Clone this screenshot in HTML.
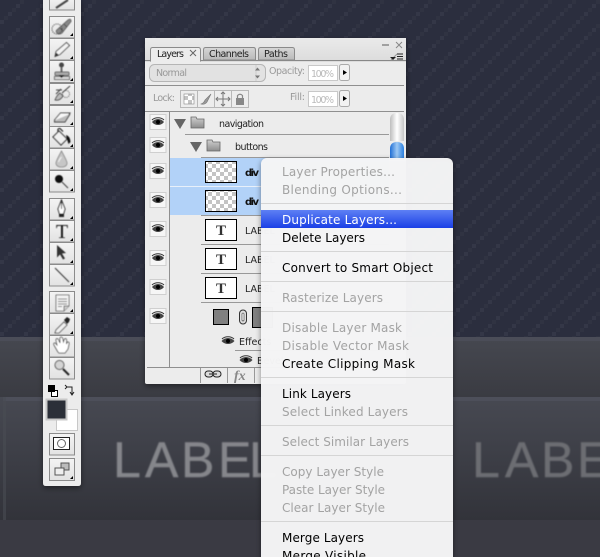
<!DOCTYPE html>
<html><head><meta charset="utf-8"><style>
html,body{margin:0;padding:0;width:600px;height:557px;overflow:hidden;background:#2b2e3e}
svg{display:block}
text{font-family:"DejaVu Sans","Liberation Sans",sans-serif}
.m{font-size:12px;fill:#000}
.d{font-size:12px;fill:#a3a3a3}
.p{font-size:9.5px;fill:#222}
.g{font-size:9.5px;fill:#999}
</style></head><body>
<svg width="600" height="557" viewBox="0 0 600 557" xmlns="http://www.w3.org/2000/svg">
<defs>
<pattern id="st" width="24" height="24" patternUnits="userSpaceOnUse">
<rect width="24" height="24" fill="#2b2e3e"/>
<g fill="#343747"><rect x="0" y="20" width="4" height="4"/><rect x="8" y="12" width="4" height="4"/><rect x="16" y="4" width="4" height="4"/></g>
<g fill="#303342"><rect x="4" y="16" width="4" height="4"/><rect x="12" y="8" width="4" height="4"/><rect x="20" y="0" width="4" height="4"/></g>
</pattern>
<pattern id="ck" width="8" height="8" patternUnits="userSpaceOnUse"><rect width="8" height="8" fill="#fff"/><rect width="4" height="4" fill="#c4c4c4"/><rect x="4" y="4" width="4" height="4" fill="#c4c4c4"/></pattern>
<linearGradient id="b1" x1="0" y1="0" x2="0" y2="1"><stop offset="0" stop-color="#45474f"/><stop offset="1" stop-color="#3a3b42"/></linearGradient>
<linearGradient id="b2" x1="0" y1="0" x2="0" y2="1"><stop offset="0" stop-color="#474952"/><stop offset="1" stop-color="#32333a"/></linearGradient>
<linearGradient id="hl" x1="0" y1="0" x2="0" y2="1"><stop offset="0" stop-color="#5e80f4"/><stop offset="1" stop-color="#1a3fe6"/></linearGradient>
<linearGradient id="btn" x1="0" y1="0" x2="0" y2="1"><stop offset="0" stop-color="#f4f4f4"/><stop offset="1" stop-color="#e2e2e2"/></linearGradient>
<linearGradient id="tab" x1="0" y1="0" x2="0" y2="1"><stop offset="0" stop-color="#d6d6d6"/><stop offset="1" stop-color="#b9b9b9"/></linearGradient>
<linearGradient id="top" x1="0" y1="0" x2="0" y2="1"><stop offset="0" stop-color="#eaeaea"/><stop offset="1" stop-color="#dcdcdc"/></linearGradient>
<linearGradient id="sb" x1="0" y1="0" x2="1" y2="0"><stop offset="0" stop-color="#1f6fd6"/><stop offset=".5" stop-color="#9cc8f4"/><stop offset="1" stop-color="#2a7fe0"/></linearGradient>
<linearGradient id="st2" x1="0" y1="0" x2="1" y2="0"><stop offset="0" stop-color="#bdbdbd"/><stop offset=".5" stop-color="#fff"/><stop offset="1" stop-color="#c6c6c6"/></linearGradient>
<linearGradient id="fold" x1="0" y1="0" x2="0" y2="1"><stop offset="0" stop-color="#d0d0d0"/><stop offset="1" stop-color="#8c8c8c"/></linearGradient>
<filter id="sh" x="-20%" y="-20%" width="140%" height="140%"><feDropShadow dx="0" dy="2" stdDeviation="3" flood-color="#000" flood-opacity=".45"/></filter>
<filter id="so"><feGaussianBlur stdDeviation=".45"/></filter>
<filter id="pb"><feGaussianBlur stdDeviation=".7"/></filter>
<g id="eye"><rect x="-8" y="-7.5" width="16" height="15" fill="#f6f6f6" stroke="#cfcfcf"/><path d="M-6 0C-3-4 3-4 6 0C3 4-3 4-6 0Z" fill="#444"/><circle r="2" fill="#000"/><path d="M-6-2C-3-5 3-5 6-2" fill="none" stroke="#333"/></g>
<g id="eye2"><path d="M-6.5 0C-3-4 3-4 6.5 0C3 4-3 4-6.5 0Z" fill="#444"/><circle r="2" fill="#000"/><path d="M-6-2C-3-5 3-5 6-2" fill="none" stroke="#333"/></g>
<g id="corner"><path d="M0 3L3 0V3Z" fill="#000"/></g>
<g id="tt"><rect x=".5" y=".5" width="31" height="21" fill="#fff" stroke="#000"/><text x="16" y="16" text-anchor="middle" style="font-family:'Liberation Serif',serif;font-size:15px;font-weight:bold" fill="#333">T</text></g>
<g id="fld"><path d="M1 2h5l1 2h7v9H1Z" fill="url(#fold)" stroke="#666" stroke-width=".8"/></g>
</defs>

<rect width="600" height="337" fill="url(#st)"/>
<rect y="337" width="600" height="220" fill="#3a3a43"/>
<rect y="337" width="600" height="4" fill="#4b4d58"/>
<rect y="341" width="600" height="56" fill="url(#b1)"/>
<rect x="0" y="397" width="600" height="123" fill="url(#b2)"/>
<rect x="3" y="397" width="597" height="4" fill="#4d4f5a"/>
<rect x="3" y="397" width="3" height="123" fill="#4a4c54" opacity=".6"/>
<g filter="url(#pb)">
<text x="113 145 181 218 249" y="477" font-size="50" fill="#85868b" stroke="#85868b" stroke-width=".4" style="font-family:'Liberation Sans',sans-serif">LABEL</text>
<text x="472 505 541 577" y="477" font-size="50" fill="#6c6d72" stroke="#6c6d72" stroke-width=".4" style="font-family:'Liberation Sans',sans-serif">LABE</text>
</g>

<!-- toolbar -->
<path d="M43 0H81V483Q81 486 78 486H46Q43 486 43 483Z" fill="#ececec" filter="url(#sh)"/>
<g fill="url(#btn)" stroke="#8b8b8b">
<rect x="49.5" y="-3" width="25" height="13"/>
<rect x="49.5" y="16.5" width="25" height="21.5"/><rect x="49.5" y="38.5" width="25" height="21.5"/><rect x="49.5" y="60.5" width="25" height="22"/><rect x="49.5" y="83.5" width="25" height="21"/><rect x="49.5" y="105.5" width="25" height="21"/><rect x="49.5" y="126.5" width="25" height="21.5"/><rect x="49.5" y="148.5" width="25" height="21.5"/><rect x="49.5" y="170.5" width="25" height="21.5"/>
<rect x="49.5" y="198.5" width="25" height="21.5"/><rect x="49.5" y="220.5" width="25" height="21.5"/><rect x="49.5" y="242.5" width="25" height="21.5"/><rect x="49.5" y="264.5" width="25" height="21.5"/>
<rect x="49.5" y="291.5" width="25" height="21.5"/><rect x="49.5" y="313.5" width="25" height="21.5"/><rect x="49.5" y="335.5" width="25" height="21.5"/><rect x="49.5" y="357.5" width="25" height="21.5"/>
<rect x="49.5" y="433.5" width="25" height="21.5"/><rect x="49.5" y="458.5" width="25" height="22"/>
</g>
<g filter="url(#so)">
<path d="M56 8L68 0" stroke="#444" stroke-width="2" fill="none"/>
<!-- healing -->
<path d="M58 29L68 20Q71 18 71 21.500L62 33Q59 35 57 33Q55 31 58 29Z" fill="#888" stroke="#666"/><path d="M60 28l3 3M64 24l3 3" stroke="#444" stroke-width=".8"/>
<circle cx="57" cy="29" r="5" fill="none" stroke="#222" stroke-width=".8" stroke-dasharray="1 1"/>
<!-- pencil -->
<path d="M55 56.500l1-5L66.500 42.500l3 3L60 54.500Z" fill="#f4f4f4" stroke="#444" stroke-width=".9"/><path d="M55 56.500l1-4 3 2.500Z" fill="#333"/>
<!-- stamp -->
<circle cx="61.500" cy="65" r="2.500" fill="#444"/><path d="M60.500 67h2v5h-2Z" fill="#666"/><rect x="55" y="72" width="14" height="3.500" rx="1" fill="#aaa" stroke="#444" stroke-width=".8"/><path d="M54.500 76.500h15v3h-15Z" fill="#ddd" stroke="#444" stroke-width=".8"/><path d="M58.500 75h6l-3 3Z" fill="#111"/>
<!-- history brush -->
<path d="M56 90h6M56 94l5-5M62 93L70 86" stroke="#444" stroke-width="1.100" fill="none"/><path d="M55 100Q60 101 63 96L60 93Q57 95 55 100Z" fill="#bbb" stroke="#333" stroke-width=".8"/><circle cx="66" cy="94" r="3.500" fill="none" stroke="#444" stroke-width=".8" stroke-dasharray="1 1"/>
<!-- eraser -->
<path d="M54.500 120l6-7h9.500l-5 7.500H55Z" fill="#f8f8f8" stroke="#333" stroke-width=".9"/><path d="M54.500 120.500v1.500h10.500l5-8" fill="#bbb" stroke="#333" stroke-width=".9"/>
<!-- paint bucket -->
<path d="M53 137l6-6 8 8-6 6Z" fill="#f0f0f0" stroke="#111"/><path d="M58 132q-1-4 2-3.500l3 3" stroke="#111" fill="none"/><path d="M66 135q4 1 4.500 7l-2 2-1.500-5Z" fill="#111"/>
<!-- drop -->
<path d="M61.500 151Q56 161 56 163Q56 167 61.500 167Q67 167 67 163Q67 161 61.500 151Z" fill="#c6c6c6" stroke="#888" stroke-width=".8"/><path d="M58.500 162q1-3 3-5" stroke="#f4f4f4" fill="none"/>
<!-- burn -->
<circle cx="59" cy="179" r="4" fill="#111"/><path d="M62 182l6 6" stroke="#444" stroke-width="1.100"/>
<!-- pen -->
<path d="M61.500 200l3.500 9-1.500 5h-4l-1.500-5Z" fill="#fff" stroke="#111"/><path d="M61.500 202v7" stroke="#111" stroke-width=".8"/><rect x="59" y="214.500" width="5" height="2.500" fill="#222"/>
<text x="62" y="238" text-anchor="middle" style="font-family:'Liberation Serif',serif;font-size:20px" fill="#111">T</text>
<!-- arrow -->
<path d="M57 245l9 8-4 .5 3 5-2 1-3-5-3 3Z" fill="#333"/>
<!-- line -->
<path d="M55 268l14 14" stroke="#333" stroke-width="1"/>
<!-- note -->
<path d="M56 295h13v11l-5 5h-8Z" fill="#f4f4f4" stroke="#555" stroke-width=".8"/><path d="M64 311v-5h5" fill="#ccc" stroke="#555" stroke-width=".8"/><path d="M58 299h9M58 301.500h9M58 304h9M58 306.500h4" stroke="#555" stroke-width=".8"/>
<!-- eyedropper -->
<path d="M55 333l1-3 8-8 3 3-8 8Z" fill="#f0f0f0" stroke="#333" stroke-width=".8"/><path d="M64 320l3-3 3 2-1 3-2 2Z" fill="#222"/>
<!-- hand -->
<path d="M58 352l-4-7q-1-2 1-2l2 2-1-5q0-2 2-1l2 4V338q1-2 2.500 0l1 4 1-3q2-1 2 1l0 4 1-2q2 0 1.500 2l-1 5-3 4h-6Z" fill="#fff" stroke="#333" stroke-width=".8"/>
<!-- zoom -->
<circle cx="59.500" cy="365" r="4.500" fill="#d4d4d4" stroke="#555"/><path d="M63 369l6 6" stroke="#222" stroke-width="2"/>
</g>
<g fill="#000">
<use href="#corner" x="70" y="33"/><use href="#corner" x="70" y="56"/><use href="#corner" x="70" y="78"/><use href="#corner" x="70" y="100"/><use href="#corner" x="70" y="122"/><use href="#corner" x="70" y="144"/><use href="#corner" x="70" y="166"/><use href="#corner" x="70" y="188"/><use href="#corner" x="70" y="216"/><use href="#corner" x="70" y="238"/><use href="#corner" x="70" y="260"/><use href="#corner" x="70" y="282"/><use href="#corner" x="70" y="309"/><use href="#corner" x="70" y="331"/><use href="#corner" x="70" y="476"/>
</g>
<!-- default/swap -->
<rect x="51.500" y="390.500" width="6" height="6" fill="#fff" stroke="#000"/><rect x="48" y="385" width="7" height="7" fill="#000"/>
<path d="M67 387h5v7M65 389l2-2-2-2M70 392l2 3 2-3" fill="none" stroke="#222"/>
<!-- colors -->
<rect x="56.500" y="409.500" width="21" height="21" fill="#fff" stroke="#c8c8c8"/>
<rect x="46.500" y="399.500" width="20" height="20" fill="#2b2f38" stroke="#c8c8c8" stroke-width="2"/>
<!-- quick mask -->
<rect x="53.500" y="437.500" width="16" height="12" fill="#fff" stroke="#222"/><circle cx="61.500" cy="443.500" r="4" fill="#fff" stroke="#666"/>
<!-- screen mode -->
<rect x="61" y="463" width="8" height="7" fill="#bbb" stroke="#555"/><rect x="55" y="468" width="9" height="7" fill="#eee" stroke="#555"/>

<!-- layers panel -->
<rect x="145" y="38" width="261" height="346" rx="2" fill="#ececec" filter="url(#sh)"/>
<rect x="145" y="38" width="261" height="24" fill="url(#top)"/>
<rect x="145" y="60" width="261" height="1" fill="#888"/>
<path d="M203.500 60V50q0-2.500 2-2.500h48q2 0 2 2.500v10Z" fill="url(#tab)" stroke="#8a8a8a"/>
<path d="M258.500 60V50q0-2.500 2-2.500h32q2 0 2 2.500v10Z" fill="url(#tab)" stroke="#8a8a8a"/>
<path d="M150.500 61V50q0-2.500 2-2.500h46q2 0 2 2.500v11Z" fill="#ececec" stroke="#8a8a8a"/><rect x="151" y="60" width="49" height="2" fill="#ececec"/>
<text class="p" x="157" y="57" textLength="27">Layers</text>
<path d="M190 50l6 6M196 50l-6 6" stroke="#666"/>
<text class="p" x="209" y="57" textLength="40">Channels</text>
<text class="p" x="264" y="57" textLength="24">Paths</text>
<path d="M382 45h7" stroke="#888" stroke-width="1.500"/><path d="M396 42l6 6M402 42l-6 6" stroke="#888"/>
<path d="M391 60l6-6" stroke="#999"/><path d="M390 57h6l-3 3Z" fill="#222"/><path d="M397 54h6M397 56.500h6M397 59h6" stroke="#222"/>
<rect x="149.500" y="64.500" width="116" height="17" rx="5" fill="#e2e2e2" stroke="#b5b5b5"/>
<text class="g" x="156" y="76" textLength="31">Normal</text>
<path d="M256 65v16" stroke="#ccc"/><path d="M255 70.500l2.500-3 2.500 3ZM255 75.500l2.500 3 2.500-3Z" fill="#777"/>
<text class="g" x="269" y="74" textLength="36">Opacity:</text>
<rect x="308.500" y="65.500" width="29" height="15" fill="#fff" stroke="#c8c8c8"/><text x="311" y="77" style="font-size:9.500px" fill="#bbb" textLength="23">100%</text>
<rect x="339.500" y="64.500" width="10" height="16" rx="2" fill="#f2f2f2" stroke="#aaa"/><path d="M343 70l4 2.500-4 2.500Z" fill="#000"/>
<rect x="145" y="85" width="259" height="1" fill="#8f8f8f"/>
<text class="g" x="153" y="101" textLength="22">Lock:</text>
<g fill="#ededed" stroke="#b8b8b8"><rect x="180.500" y="90.500" width="17" height="17"/><rect x="197.500" y="90.500" width="17" height="17"/><rect x="214.500" y="90.500" width="17" height="17"/><rect x="231.500" y="90.500" width="17" height="17"/></g>
<rect x="184" y="94" width="10" height="10" fill="url(#ck)" stroke="#888" stroke-width=".6"/>
<path d="M201 104q3-1 4-4l6-6-4 8q-2 3-6 2Z" fill="#999" stroke="#777" stroke-width=".6"/>
<path d="M223 92v14M216 99h14M221 94l2-2 2 2M221 104l2 2 2-2M218 97l-2 2 2 2M228 97l2 2-2 2" fill="none" stroke="#777"/>
<rect x="236" y="98" width="8" height="7" fill="#888"/><path d="M237.500 98v-2.500q2.500-2.500 5 0V98" fill="none" stroke="#888" stroke-width="1.200"/>
<text class="g" x="290" y="100" textLength="15">Fill:</text>
<rect x="308.500" y="91.500" width="29" height="15" fill="#fff" stroke="#c8c8c8"/><text x="311" y="103" style="font-size:9.500px" fill="#bbb" textLength="23">100%</text>
<rect x="339.500" y="90.500" width="10" height="16" rx="2" fill="#f2f2f2" stroke="#aaa"/><path d="M343 96l4 2.500-4 2.500Z" fill="#000"/>
<rect x="145" y="111" width="259" height="1" fill="#8f8f8f"/>
<!-- rows -->
<rect x="170" y="158" width="219" height="28" fill="#b2d2f8"/>
<rect x="170" y="187" width="219" height="28" fill="#b2d2f8"/>
<rect x="169" y="111" width="1" height="256" fill="#8f8f8f"/>
<rect x="185" y="134" width="204" height="1" fill="#999"/>
<rect x="201" y="157" width="188" height="1" fill="#999"/>
<rect x="170" y="186" width="219" height="1" fill="#e8f0fa"/>
<rect x="201" y="215" width="188" height="1" fill="#999"/>
<rect x="201" y="244" width="188" height="1" fill="#999"/>
<rect x="201" y="273" width="188" height="1" fill="#999"/>
<rect x="201" y="302" width="188" height="1" fill="#999"/>
<rect x="235" y="350" width="154" height="1" fill="#999"/>
<use href="#eye" x="158" y="122"/><use href="#eye" x="158" y="145"/><use href="#eye" x="158" y="171"/><use href="#eye" x="158" y="200"/><use href="#eye" x="158" y="229"/><use href="#eye" x="158" y="258"/><use href="#eye" x="158" y="287"/><use href="#eye" x="158" y="316"/>
<path d="M174 119h12l-6 10Z" fill="#666"/><path d="M190 142h12l-6 10Z" fill="#666"/>
<use href="#fld" x="190" y="115"/><use href="#fld" x="206" y="138"/>
<text class="p" x="219" y="127" textLength="45">navigation</text>
<text class="p" x="235" y="150" textLength="33">buttons</text>
<rect x="205.500" y="161.500" width="31" height="21" fill="url(#ck)" stroke="#000"/>
<rect x="205.500" y="190.500" width="31" height="21" fill="url(#ck)" stroke="#000"/>
<text x="245" y="176" style="font-size:10px;font-weight:bold" fill="#111" textLength="14">div</text>
<text x="245" y="205" style="font-size:10px;font-weight:bold" fill="#111" textLength="14">div</text>
<use href="#tt" x="205" y="219"/><use href="#tt" x="205" y="248"/><use href="#tt" x="205" y="277"/>
<text class="p" x="245" y="234">LABEL</text><text class="p" x="245" y="263">LABEL</text><text class="p" x="245" y="292">LABEL</text>
<rect x="213.500" y="309.500" width="15" height="15" fill="#808080" stroke="#000"/>
<rect x="239.500" y="310" width="7" height="14" rx="3.500" fill="#ddd" stroke="#333"/><rect x="242" y="313" width="2" height="8" rx="1" fill="#fff" stroke="#333" stroke-width=".6"/>
<rect x="252.500" y="307.500" width="20" height="20" fill="#808080" stroke="#000"/>
<use href="#eye2" x="228" y="341"/><text class="p" x="239" y="345">Effects</text>
<use href="#eye2" x="246" y="360"/><text class="p" x="257" y="364">Bevel</text>
<!-- scrollbar -->
<rect x="389" y="112" width="15" height="50" fill="#ececec"/>
<path d="M390 141V120q0-7 7-7t7 7v21Z" fill="url(#st2)"/>
<path d="M390 160V149q0-7 7-7t7 7v11Z" fill="url(#sb)"/>
<!-- bottom bar -->
<rect x="147" y="367" width="259" height="1" fill="#8f8f8f"/>
<path d="M200.500 368v15M227.500 368v15M254.500 368v15" stroke="#999"/>
<rect x="205" y="371" width="8" height="6" rx="3" fill="#ddd" stroke="#222"/><rect x="213" y="371" width="8" height="6" rx="3" fill="#ddd" stroke="#222"/><path d="M209 374h8" stroke="#222"/>
<text x="234" y="380" style="font-family:'Liberation Serif',serif;font-size:14px;font-style:italic;font-weight:bold" fill="#888">fx</text>

<!-- context menu -->
<rect x="261" y="158" width="192" height="410" rx="6" fill="#f6f6f7" fill-opacity=".97" filter="url(#sh)"/>
<rect x="261" y="210" width="192" height="18" fill="url(#hl)"/>
<g fill="#d5d5d5"><rect x="261" y="203" width="192" height="1"/><rect x="261" y="251" width="192" height="1"/><rect x="261" y="281" width="192" height="1"/><rect x="261" y="311" width="192" height="1"/><rect x="261" y="377" width="192" height="1"/><rect x="261" y="425" width="192" height="1"/><rect x="261" y="455" width="192" height="1"/><rect x="261" y="521" width="192" height="1"/></g>
<text class="d" x="282" y="176" textLength="113">Layer Properties...</text>
<text class="d" x="282" y="194" textLength="120">Blending Options...</text>
<text class="m" x="282" y="224" textLength="115" style="fill:#fff">Duplicate Layers...</text>
<text class="m" x="282" y="242" textLength="83">Delete Layers</text>
<text class="m" x="282" y="272" textLength="151">Convert to Smart Object</text>
<text class="d" x="282" y="302" textLength="101">Rasterize Layers</text>
<text class="d" x="282" y="332" textLength="120">Disable Layer Mask</text>
<text class="d" x="282" y="350" textLength="127">Disable Vector Mask</text>
<text class="m" x="282" y="368" textLength="133">Create Clipping Mask</text>
<text class="m" x="282" y="398" textLength="69">Link Layers</text>
<text class="d" x="282" y="416" textLength="126">Select Linked Layers</text>
<text class="d" x="282" y="446" textLength="127">Select Similar Layers</text>
<text class="d" x="282" y="476" textLength="102">Copy Layer Style</text>
<text class="d" x="282" y="494" textLength="103">Paste Layer Style</text>
<text class="d" x="282" y="512" textLength="103">Clear Layer Style</text>
<text class="m" x="282" y="542" textLength="82">Merge Layers</text>
<text class="m" x="282" y="560" textLength="84">Merge Visible</text>
</svg>
</body></html>
